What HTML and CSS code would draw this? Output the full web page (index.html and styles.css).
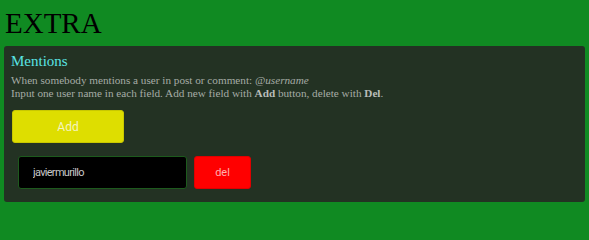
FILE: index.html
```html
<!DOCTYPE html>
<html>
<head>
<meta charset="utf-8">
<link rel="stylesheet" href="styles.css">
</head>
<body>
<h1 class="page-title">EXTRA</h1>
<section class="panel">
  <h2 class="panel-title">Mentions</h2>
  <p class="desc">When somebody mentions a user in post or comment: <em>@username</em><br>Input one user name in each field. Add new field with <b>Add</b> button, delete with <b>Del</b>.</p>
  <button class="btn-add" type="button">Add</button>
  <div class="field-row">
    <input class="user-input" type="text" value="javiermurillo">
    <button class="btn-del" type="button">del</button>
  </div>
</section>
</body>
</html>
```

FILE: styles.css
```css
html {
  background: #108a22;
}
html, body {
  margin: 0;
  padding: 0;
}
body {
  background: #108a22;
  font-family: "Liberation Serif", "Times New Roman", serif;
  padding: 0 4px 2px;
}
.page-title {
  margin: 0;
  font-size: 29px;
  font-weight: normal;
  line-height: 46px;
  height: 46px;
  color: #000;
  padding-left: 1px;
}
.panel {
  background: #233223;
  border-radius: 3px;
  padding: 6px 7px 13px;
}
.panel-title {
  margin: 0;
  font-size: 15px;
  font-weight: normal;
  line-height: 18px;
  color: #5ae4e4;
}
.desc {
  margin: 4px 0 0;
  font-size: 11.2px;
  line-height: 13px;
  color: #a6aca6;
}
.desc b {
  color: #babeba;
}
.btn-add {
  display: block;
  margin: 10px 0 0 1px;
  width: 112px;
  height: 33px;
  background: #dede00;
  border: 1px solid #c8c800;
  border-radius: 3px;
  color: #f4f4c0;
  font-family: Roboto, "Liberation Sans", sans-serif;
  font-size: 12px;
  padding: 0;
}
.field-row {
  display: flex;
  gap: 7px;
  margin: 13px 0 0 7px;
}
.user-input {
  box-sizing: border-box;
  width: 169px;
  height: 33px;
  background: #000;
  border: 1px solid #1d5a1d;
  border-radius: 3px;
  color: #c8c8c8;
  font-family: Roboto, "Liberation Sans", sans-serif;
  font-size: 11px;
  letter-spacing: -0.7px;
  padding: 0 14px;
  outline: none;
}
.btn-del {
  width: 57px;
  height: 33px;
  background: #ff0000;
  border: 1px solid #e00000;
  border-radius: 3px;
  color: #ffb0b0;
  font-family: Roboto, "Liberation Sans", sans-serif;
  font-size: 11px;
  padding: 0;
}
```
